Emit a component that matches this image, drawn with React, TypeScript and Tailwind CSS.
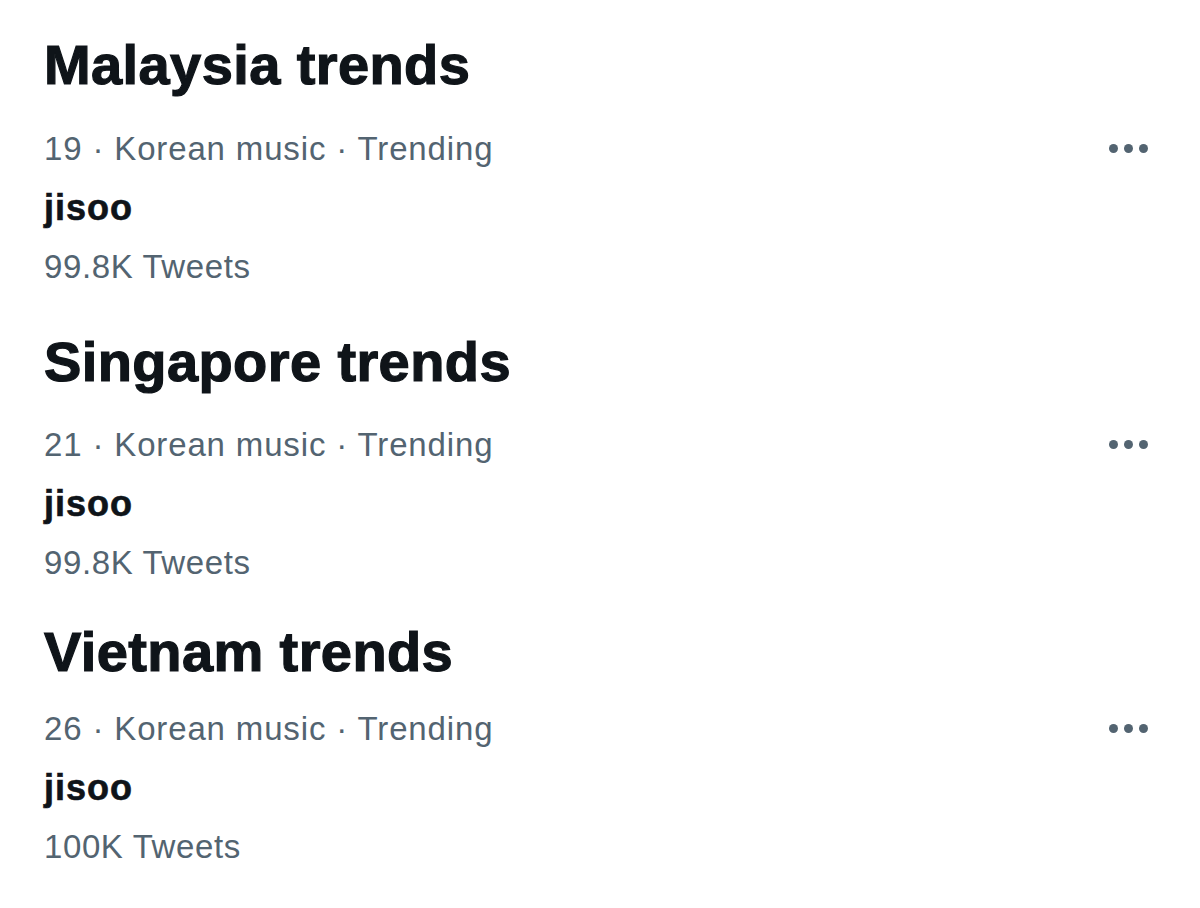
import React from "react";

type Section = {
  title: string;
  rank: string;
  tweets: string;
  headTop: string;
  metaGap: string;
};

const sections: Section[] = [
  { title: "Malaysia trends", rank: "19", tweets: "99.8K Tweets", headTop: "mt-[30px]", metaGap: "mt-[19px]" },
  { title: "Singapore trends", rank: "21", tweets: "99.8K Tweets", headTop: "mt-[31px]", metaGap: "mt-[18px]" },
  { title: "Vietnam trends", rank: "26", tweets: "100K Tweets", headTop: "mt-[25px]", metaGap: "mt-[12px]" },
];

function Dots() {
  return (
    <div className="flex items-center gap-[6px]">
      <span className="block h-[9px] w-[9px] rounded-full bg-[#536471]" />
      <span className="block h-[9px] w-[9px] rounded-full bg-[#536471]" />
      <span className="block h-[9px] w-[9px] rounded-full bg-[#536471]" />
    </div>
  );
}

export default function App() {
  return (
    <div
      className="min-h-[908px] w-[1200px] bg-white pl-[44px] pr-[52px]"
      style={{ fontFamily: '"Liberation Sans", Arial, sans-serif' }}
    >
      {sections.map((s) => (
        <div key={s.title} className="flex flex-col">
          <h2
            className={`${s.headTop} h-[70px] text-[56px] font-bold leading-[70px] tracking-[0.4px] text-[#0f1419] [-webkit-text-stroke:1.2px_#0f1419]`}
          >
            {s.title}
          </h2>
          <div className={`${s.metaGap} flex h-[59px] items-center justify-between`}>
            <div className="text-[33px] leading-[59px] tracking-[0.85px] text-[#536471]">
              {s.rank} · Korean music · Trending
            </div>
            <Dots />
          </div>
          <div className="h-[59px] text-[36px] font-bold leading-[59px] tracking-[1px] text-[#0f1419] [-webkit-text-stroke:0.6px_#0f1419]">
            jisoo
          </div>
          <div className="h-[59px] text-[33px] leading-[59px] tracking-[0.6px] text-[#536471]">
            {s.tweets}
          </div>
        </div>
      ))}
    </div>
  );
}
